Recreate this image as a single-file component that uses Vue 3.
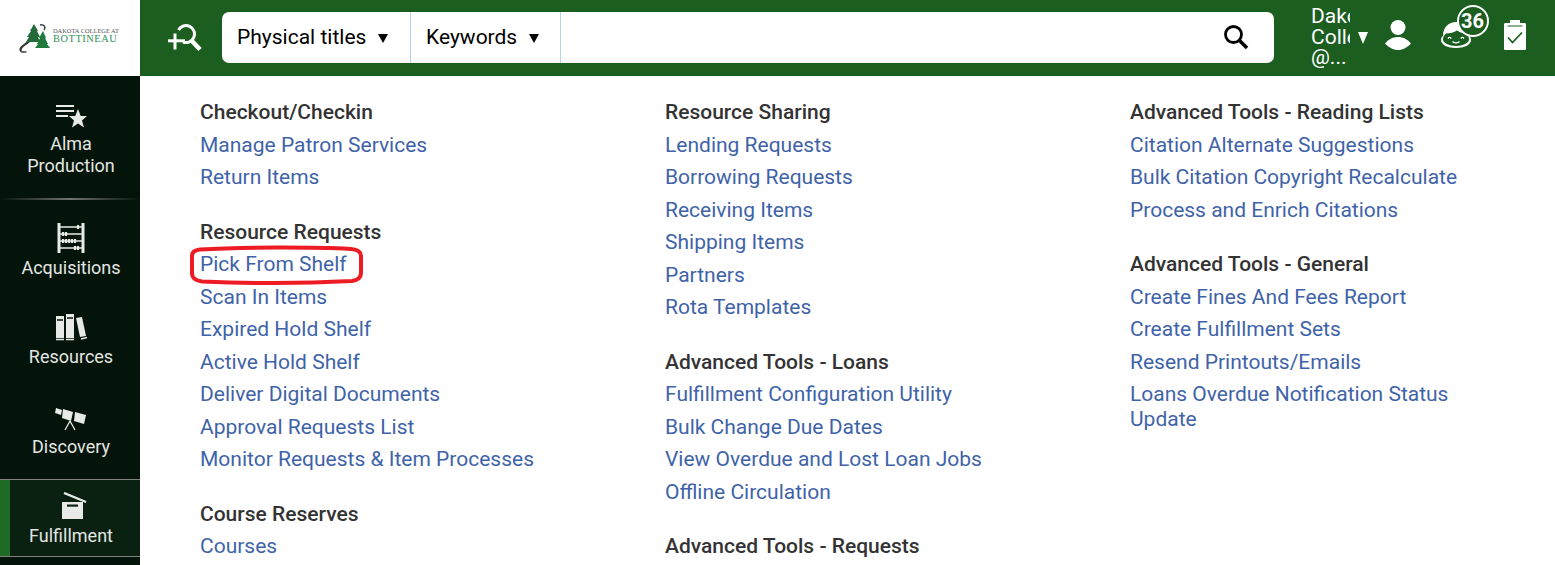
<script setup>
const columns = [
  [
    { title: 'Checkout/Checkin', links: ['Manage Patron Services', 'Return Items'] },
    { title: 'Resource Requests', links: ['Pick From Shelf', 'Scan In Items', 'Expired Hold Shelf', 'Active Hold Shelf', 'Deliver Digital Documents', 'Approval Requests List', 'Monitor Requests & Item Processes'] },
    { title: 'Course Reserves', links: ['Courses'] },
  ],
  [
    { title: 'Resource Sharing', links: ['Lending Requests', 'Borrowing Requests', 'Receiving Items', 'Shipping Items', 'Partners', 'Rota Templates'] },
    { title: 'Advanced Tools - Loans', links: ['Fulfillment Configuration Utility', 'Bulk Change Due Dates', 'View Overdue and Lost Loan Jobs', 'Offline Circulation'] },
    { title: 'Advanced Tools - Requests', links: [] },
  ],
  [
    { title: 'Advanced Tools - Reading Lists', links: ['Citation Alternate Suggestions', 'Bulk Citation Copyright Recalculate', 'Process and Enrich Citations'] },
    { title: 'Advanced Tools - General', links: ['Create Fines And Fees Report', 'Create Fulfillment Sets', 'Resend Printouts/Emails', 'Loans Overdue Notification Status Update'] },
  ],
]
</script>

<template>
  <div class="app">
    <header class="top">
      <div class="logo">
        <svg class="logo-mark" width="32" height="30" viewBox="0 0 32 30">
          <path d="M2 27c-2-3 2-5 6-8 3-2 6-5 8-8" fill="none" stroke="#3a3a3a" stroke-width="2.200"/>
          <path d="M1.500 27c2 1.500 4 1.500 6 .5" fill="none" stroke="#555" stroke-width="1.800"/>
          <polygon points="15,0 19,7 18,7 21,13 19,13 21,18 7,18 10,13 8,13 12,7 11,7" fill="#236b3a"/>
          <polygon points="24,7 27,14 26,14 29,20 28,20 31,24 16,24 19,20 18,20 21,14 20,14" fill="#1f7a3c"/>
          <path d="M21 1c4-1 6 2 4 5" fill="none" stroke="#444" stroke-width="1.500"/>
        </svg>
        <div class="logo-text">
          <span class="logo-small">DAKOTA COLLEGE AT</span>
          <span class="logo-big">BOTTINEAU</span>
        </div>
      </div>
      <div class="bar">
        <svg class="adv" width="36" height="30" viewBox="0 0 36 30">
          <path d="M11.500 6A8.500 8.500 0 1 1 16 18" fill="none" stroke="#fff" stroke-width="3"/>
          <path d="M24.500 16.500l8.500 9" stroke="#fff" stroke-width="4.500"/>
          <rect x="1" y="15.300" width="17" height="3" fill="#fff"/>
          <rect x="6.500" y="9.500" width="3" height="16" fill="#fff"/>
        </svg>
        <div class="search">
          <div class="sel sel-a"><span>Physical titles</span><i class="tri"></i></div>
          <div class="sel sel-b"><span>Keywords</span><i class="tri"></i></div>
          <div class="input"></div>
          <svg class="glass" width="26" height="26" viewBox="0 0 26 26">
            <circle cx="10.500" cy="10.500" r="8" fill="none" stroke="#000" stroke-width="2.800"/>
            <path d="M16 16l8 8" stroke="#000" stroke-width="3.600"/>
          </svg>
        </div>
        <div class="inst">
          <div class="inst-text">Dakota College @...</div>
          <i class="tri-white"></i>
        </div>
        <svg class="ic-user" width="28" height="32" viewBox="0 0 28 32">
          <circle cx="14" cy="8.500" r="7.500" fill="#fff"/>
          <path d="M1 24.500C5 20 9 18 14 18s9 2 13 6.500C23 28.500 19 31 14 31S5 28.500 1 24.500z" fill="#fff"/>
        </svg>
        <div class="alerts">
          <svg width="32" height="28" viewBox="0 0 32 28">
            <path d="M3 15C3 6 9 1 16 1s13 5 13 14c1.500 1 2 2.500 2 4 0 5-7 8-15 8S1 24 1 19c0-1.500.5-3 2-4z" fill="#fff"/>
            <path d="M6 12.500c4 0 8-1 11-3 3 2 6 3 9 3 2 1.500 3 3.500 3 6 0 3.500-6 6.500-13 6.500S3 22 3 18.500c0-2.500 1-4.500 3-6z" fill="#1b5e20"/>
            <path d="M8 17.500c1-1.400 2.200-1.400 3.200 0M20.800 17.500c1-1.400 2.200-1.400 3.200 0M12.500 20.500c2.300 1.800 4.700 1.800 7 0" fill="none" stroke="#fff" stroke-width="1.300"/>
          </svg>
          <span class="badge">36</span>
        </div>
        <svg class="ic-clip" width="22" height="30" viewBox="0 0 22 30">
          <path d="M6 .5c0-.3.3-.5.5-.5h9c.3 0 .5.2.5.5V3h4.500c1 0 1.500.5 1.500 1.500v24c0 1-.5 1.500-1.500 1.500h-19C.5 30 0 29.500 0 28.500v-24C0 3.500.5 3 1.500 3H6z" fill="#fff"/>
          <path d="M3.500 6h15" stroke="#1b5e20" stroke-width="1"/>
          <path d="M4 17.500l4.500 5L18 12.500" fill="none" stroke="#1b5e20" stroke-width="1.700"/>
        </svg>
      </div>
    </header>

    <div class="body">
      <nav class="side">
        <div class="nav nav-alma">
          <svg width="32" height="26" viewBox="0 0 32 26">
            <path d="M1 3h18M1 8h18M1 13h12" stroke="#e8eae8" stroke-width="2"/>
            <polygon points="23,6 25.700,13 32,13 27,17.500 29,24.500 23,20.500 17,24.500 19,17.500 14,13 20.300,13" fill="#e8eae8"/>
          </svg>
          <span>Alma<br>Production</span>
        </div>
        <div class="rule"></div>
        <div class="nav nav-acq">
          <svg width="28" height="30" viewBox="0 0 28 30">
            <path d="M2 0v30M26 0v30" stroke="#e8eae8" stroke-width="3"/>
            <path d="M2 4h24M2 11h24M2 18h24M2 25h24" stroke="#e8eae8" stroke-width="1.300"/>
            <path d="M21 2v4M6 9v4M9 9v4M6 16v4M9 16v4M12 16v4M15 16v4M18 16v4M18 23v4M21 23v4" stroke="#e8eae8" stroke-width="2.200"/>
          </svg>
          <span>Acquisitions</span>
        </div>
        <div class="nav nav-res">
          <svg width="32" height="28" viewBox="0 0 32 28">
            <path d="M1 3h8v22H1zM11 1h8v24h-8z" fill="#e8eae8"/>
            <path d="M1 26.500h8M11 26.500h8" stroke="#e8eae8" stroke-width="1.500"/>
            <path d="M2 7h6M12 5h6" stroke="#05140a" stroke-width="1.400"/>
            <path d="M21 5l6-1 4 19-6 1z" fill="#e8eae8"/>
            <path d="M26 26l6-1.500" stroke="#e8eae8" stroke-width="1.500"/>
          </svg>
          <span>Resources</span>
        </div>
        <div class="nav nav-dis">
          <svg width="34" height="24" viewBox="0 0 34 24">
            <path d="M2 1l6 2-1 5-6-2zM9 2l10 3-2 9-9-3zM21 5l11 3-2 9-10-3z" fill="#e8eae8"/>
            <path d="M16 14l-5 9M16 14l5 9" stroke="#e8eae8" stroke-width="1.300" fill="none"/>
          </svg>
          <span>Discovery</span>
        </div>
        <div class="nav nav-ful">
          <svg width="26" height="27" viewBox="0 0 26 27">
            <path d="M3 1l22 9" stroke="#e8eae8" stroke-width="2.400"/>
            <path d="M1 10h21v17H1z" fill="#e8eae8"/>
            <rect x="6" y="12.500" width="11" height="2.200" fill="#0a2010"/>
          </svg>
          <span>Fulfillment</span>
        </div>
      </nav>

      <main class="menu">
        <div v-for="(col, c) in columns" :key="c" class="col">
          <section v-for="group in col" :key="group.title" class="group">
            <h3>{{ group.title }}</h3>
            <a v-for="link in group.links" :key="link" class="link">
              {{ link }}
              <svg v-if="link === 'Pick From Shelf'" class="ring" width="176" height="42" viewBox="0 0 176 42">
                <path d="M11 4.500C50 2 125 2 162 4c7 .5 10 3 10 7v17c0 5-3 7-9 8-45 2.500-105 2.500-150 .5-6-.8-10-3-10-8V11c0-4 3-6 8-6.500z" fill="none" stroke="#ed1c24" stroke-width="4"/>
              </svg>
            </a>
          </section>
        </div>
      </main>
    </div>
  </div>
</template>

<style>
html, body { margin: 0; overflow: hidden; background: #fff; }
</style>

<style scoped>
.app { width: 1555px; height: 565px; overflow: hidden; font-family: Roboto, "Liberation Sans", sans-serif; display: flex; flex-direction: column; }
.top { display: flex; height: 76px; flex: none; }
.logo { width: 140px; flex: none; background: #fff; display: flex; align-items: center; padding-left: 19px; box-sizing: border-box; gap: 2px; }
.logo-mark { flex: none; margin-top: 2px; filter: blur(.3px); }
.logo-text { display: flex; flex-direction: column; font-family: "Liberation Serif", serif; line-height: 1; margin-top: -4px; }
.logo-small { font-size: 6.400px; color: #555; white-space: nowrap; }
.logo-big { font-size: 10.300px; color: #2f8f5b; letter-spacing: .6px; white-space: nowrap; }
.bar { flex: 1; background: #1b5e20; display: flex; align-items: flex-start; position: relative; }
.adv { margin: 24px 0 0 27px; flex: none; }
.search { margin: 12px 0 0 19px; width: 1052px; height: 51px; background: linear-gradient(#fff 85%, #f6f6f6); border-radius: 7px; display: flex; align-items: center; flex: none; color: #000; font-size: 21px; }
.sel { height: 100%; display: flex; align-items: center; box-sizing: border-box; border-right: 1px solid #b5d3e8; white-space: nowrap; padding-bottom: 2px; }
.sel-a { width: 189px; padding-left: 15px; }
.sel-b { width: 150px; padding-left: 15px; }
.tri { width: 0; height: 0; border-left: 5px solid transparent; border-right: 5px solid transparent; border-top: 9px solid #000; margin-left: 12px; margin-top: 3px; }
.input { flex: 1; }
.glass { margin: 0 25px 2px 0; flex: none; }
.inst { margin: 6px 0 0 37px; width: 58px; display: flex; align-items: center; flex: none; height: 64px; }
.inst-text { width: 39px; height: 64px; overflow: hidden; color: #fff; font-size: 21px; line-height: 20.500px; flex: none; }
.tri-white { width: 0; height: 0; border-left: 5px solid transparent; border-right: 5px solid transparent; border-top: 12px solid #fff; margin-left: 8px; }
.ic-user { margin: 19px 0 0 15px; flex: none; }
.alerts { position: relative; width: 32px; height: 30px; margin: 21px 0 0 27.500px; flex: none; }
.alerts svg { display: block; }
.badge { position: absolute; left: 17px; top: -16px; width: 28px; height: 28px; box-sizing: content-box; border: 2px solid #fff; border-radius: 50%; background: #1b5e20; color: #fff; font-size: 20px; font-weight: 700; line-height: 28px; text-align: center; }
.ic-clip { margin: 20px 0 0 32.500px; flex: none; }

.body { display: flex; flex: 1; min-height: 0; }
.side { width: 140px; flex: none; background: #05140a; display: flex; flex-direction: column; color: #e3e6e3; font-size: 18px; line-height: 22px; text-align: center; }
.nav { display: flex; flex-direction: column; align-items: center; box-sizing: border-box; padding-left: 2px; flex: none; }
.nav span { display: block; }
.nav-alma { height: 122px; padding-top: 27px; }
.nav-alma svg { margin-bottom: 4px; }
.rule { height: 2px; flex: none; background: linear-gradient(90deg, #05140a, #6d756e 50%, #05140a); }
.nav-acq { height: 90px; padding-top: 23px; }
.nav-acq svg { margin-bottom: 4px; }
.nav-res { height: 90px; padding-top: 23px; }
.nav-res svg { margin-bottom: 5px; }
.nav-dis { height: 99px; padding-top: 27px; }
.nav-dis svg { margin-bottom: 5px; }
.nav-ful { height: 78px; padding-top: 12px; border-top: 1px solid #7b837c; border-bottom: 1px solid #7b837c; background: linear-gradient(90deg, #1d6b25 10px, #0a2010 10px); }
.nav-ful svg { margin: 0 0 6px 5px; }

.menu { flex: 1; display: flex; padding: 21.300px 0 0 60px; align-items: flex-start; min-width: 0; }
.col { width: 465px; flex: none; box-sizing: border-box; }
.col:last-child { width: 365px; }
.group { margin-bottom: 22.800px; }
h3 { margin: 0; font-size: 21px; font-weight: 500; color: #333; line-height: 30px; height: 31.700px; }
.link { display: block; position: relative; color: #3f63a8; font-size: 21px; line-height: 25px; padding: 3.750px 0; white-space: normal; }
.ring { position: absolute; left: -11px; top: -3px; pointer-events: none; }
</style>
